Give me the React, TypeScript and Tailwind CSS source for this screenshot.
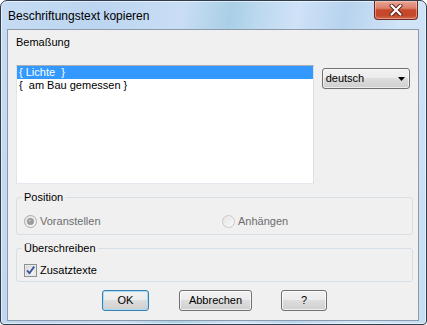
import React from "react";

const btnBase =
  "flex h-[21px] items-center justify-center rounded-[3px] border text-[11px] leading-[13px] text-black bg-[linear-gradient(#f2f2f2_0%,#ebebeb_50%,#dddddd_50%,#cfcfcf_100%)]";

function CloseButton() {
  return (
    <div className="mr-[8px] flex h-[19px] w-[44px] items-center justify-center rounded-b-[4px] border border-t-0 border-[#6e2a20] bg-[linear-gradient(#e9a797_0%,#dc7f68_40%,#c8482b_50%,#c4482a_80%,#d36a4c_100%)] shadow-[inset_0_0_0_1px_rgba(255,220,210,0.45)]">
      <svg width="14" height="12" viewBox="0 0 14 12">
        <path d="M2.5 1.5 L11.5 10.5 M11.5 1.5 L2.5 10.5" stroke="#5a231a" strokeWidth="4" strokeLinecap="round" />
        <path d="M2.5 1.5 L11.5 10.5 M11.5 1.5 L2.5 10.5" stroke="#ffffff" strokeWidth="2.2" strokeLinecap="round" />
      </svg>
    </div>
  );
}

function Radio({ checked }: { checked?: boolean }) {
  return (
    <svg width="13" height="13" viewBox="0 0 13 13" className="shrink-0">
      <defs>
        <linearGradient id={checked ? "rg1" : "rg2"} x1="0" y1="0" x2="1" y2="1">
          <stop offset="0" stopColor="#e2e2e2" />
          <stop offset="1" stopColor="#fbfbfb" />
        </linearGradient>
      </defs>
      <circle cx="6.5" cy="6.5" r="6" fill={`url(#${checked ? "rg1" : "rg2"})`} stroke={checked ? "#a9a9a9" : "#c9c9c9"} />
      {checked && <circle cx="6.5" cy="6.5" r="3.2" fill="#9d9d9d" stroke="#8a8a8a" strokeWidth="0.6" />}
      {checked && <circle cx="5.8" cy="5.6" r="1.1" fill="#c4c4c4" />}
    </svg>
  );
}

function Checkbox() {
  return (
    <svg width="13" height="13" viewBox="0 0 13 13" className="shrink-0">
      <defs>
        <linearGradient id="cb" x1="0" y1="0" x2="1" y2="1">
          <stop offset="0" stopColor="#dcdcdc" />
          <stop offset="1" stopColor="#fafafa" />
        </linearGradient>
      </defs>
      <rect x="0.5" y="0.5" width="12" height="12" fill="#f4f4f4" stroke="#8e8f8f" />
      <rect x="2" y="2" width="9" height="9" fill="url(#cb)" stroke="#c9d2dc" strokeWidth="0.6" />
      <path d="M3 6.4 L5.4 9.2 L10.2 2.6" fill="none" stroke="#3d5899" strokeWidth="1.9" strokeLinejoin="round" />
    </svg>
  );
}

export default function App() {
  return (
    <div className="h-[325px] w-[427px] bg-white font-['Liberation_Sans',Arial,sans-serif]">
      <div className="flex h-full w-full flex-col rounded-t-[7px] rounded-b-[4px] border border-[#2f3d4d] bg-[linear-gradient(100deg,#c6dcf3_0%,#bcd5f0_20%,#c9def5_38%,#a9cfe6_48%,#bcd9ef_54%,#cfe2f7_62%,#b7d3ee_72%,#d2e5f8_84%,#c7ddf3_100%)] pb-[3px] pl-[6px] pr-[7px] shadow-[inset_0_0_0_1px_rgba(255,255,255,0.55)]">
        <div className="-ml-[6px] -mr-[7px] flex h-[28px] shrink-0 items-start justify-between">
          <div className="mt-[8px] pl-[7px] text-[12px] leading-[14px] text-black">Beschriftungstext kopieren</div>
          <CloseButton />
        </div>

        <div className="flex flex-1 flex-col border border-[#8d9aab] bg-[#f0f0f0] px-[8px]">
          <div className="mt-[6px] text-[11px] leading-[13px] text-black">Bemaßung</div>

          <div className="mt-[16px] flex items-start">
            <div className="h-[119px] w-[300px] border border-[#abadb3] border-b-[#e3e9ef] border-l-[#e2e3ea] border-r-[#dbdfe6] bg-white text-[11px] leading-[13px] text-black">
              <div className="whitespace-pre bg-[#3399ff] pl-[2px] text-white">{"{ Lichte  }"}</div>
              <div className="whitespace-pre pl-[2px]">{"{  am Bau gemessen }"}</div>
            </div>
            <div className="ml-[8px] mt-[3px] flex h-[21px] w-[89px] items-center justify-between rounded-[3px] border border-[#707070] bg-[linear-gradient(#f2f2f2_0%,#ebebeb_50%,#dddddd_50%,#cfcfcf_100%)] pl-[3px] pr-[4px] text-[11px] leading-[13px] text-black shadow-[inset_0_0_0_1px_rgba(255,255,255,0.6)]">
              <span>deutsch</span>
              <svg width="7" height="4" viewBox="0 0 7 4">
                <path d="M0 0 H7 L3.5 4 Z" fill="#000" />
              </svg>
            </div>
          </div>

          <fieldset className="mt-[7px] w-[397px] rounded-[3px] border border-[#d5dfe5] pb-[6px]">
            <legend className="ml-[5px] px-[2px] text-[11px] leading-[13px] text-black">Position</legend>
            <div className="flex pt-[11px] text-[11px] leading-[13px] text-[#6d6d6d]">
              <div className="ml-[7px] flex w-[198px] items-center gap-[3px]">
                <Radio checked />
                <span>Voranstellen</span>
              </div>
              <div className="flex items-center gap-[3px]">
                <Radio />
                <span>Anhängen</span>
              </div>
            </div>
          </fieldset>

          <fieldset className="mt-[7px] w-[397px] rounded-[3px] border border-[#d5dfe5] pb-[4px]">
            <legend className="ml-[5px] px-[2px] text-[11px] leading-[13px] text-black">Überschreiben</legend>
            <div className="ml-[7px] flex items-center gap-[3px] pt-[9px] text-[11px] leading-[13px] text-black">
              <Checkbox />
              <span>Zusatztexte</span>
            </div>
          </fieldset>

          <div className="mt-[8px] flex">
            <button
              type="button"
              className={`${btnBase} ml-[86px] w-[47px] border-[#3c7fb1] shadow-[inset_0_0_0_1px_#a7dcf6]`}
            >
              OK
            </button>
            <button
              type="button"
              className={`${btnBase} ml-[30px] w-[73px] border-[#707070] shadow-[inset_0_0_0_1px_rgba(255,255,255,0.7)]`}
            >
              Abbrechen
            </button>
            <button
              type="button"
              className={`${btnBase} ml-[29px] w-[46px] border-[#707070] shadow-[inset_0_0_0_1px_rgba(255,255,255,0.7)]`}
            >
              ?
            </button>
          </div>
        </div>
      </div>
    </div>
  );
}
